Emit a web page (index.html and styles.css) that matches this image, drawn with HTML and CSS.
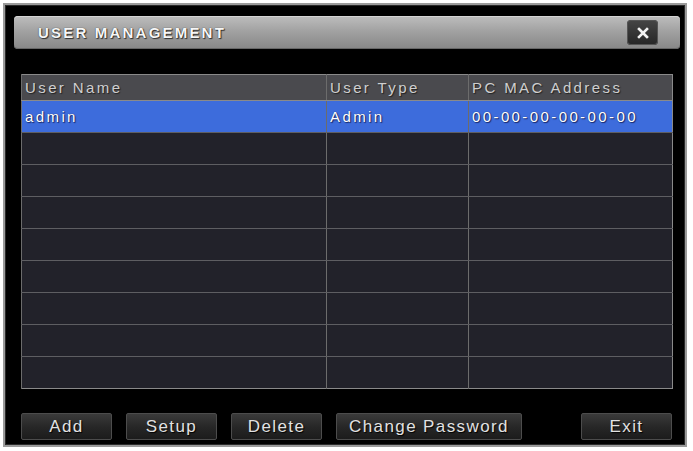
FILE: index.html
```html
<!DOCTYPE html>
<html lang="en">
<head>
    <meta charset="UTF-8">
    <meta name="viewport" content="width=device-width, initial-scale=1.0">
    <title>User Management</title>
    <link rel="stylesheet" href="styles.css">
</head>
<body>
    <div class="window">
        <div class="titlebar">
            <span class="title">USER MANAGEMENT</span>
            <button class="close" type="button" aria-label="Close">
                <svg width="12" height="12" viewBox="0 0 12 12">
                    <path d="M2 2 L10 10 M10 2 L2 10" stroke="#f2f2f2" stroke-width="2.6" stroke-linecap="square"/>
                </svg>
            </button>
        </div>

        <table class="users">
            <colgroup>
                <col class="col-name">
                <col class="col-type">
                <col class="col-mac">
            </colgroup>
            <thead>
                <tr>
                    <th>User Name</th>
                    <th>User Type</th>
                    <th>PC MAC Address</th>
                </tr>
            </thead>
            <tbody>
                <tr class="selected">
                    <td>admin</td>
                    <td>Admin</td>
                    <td>00-00-00-00-00-00</td>
                </tr>
                <tr><td></td><td></td><td></td></tr>
                <tr><td></td><td></td><td></td></tr>
                <tr><td></td><td></td><td></td></tr>
                <tr><td></td><td></td><td></td></tr>
                <tr><td></td><td></td><td></td></tr>
                <tr><td></td><td></td><td></td></tr>
                <tr><td></td><td></td><td></td></tr>
                <tr><td></td><td></td><td></td></tr>
            </tbody>
        </table>

        <div class="actions">
            <button type="button" class="btn btn-small">Add</button>
            <button type="button" class="btn btn-small">Setup</button>
            <button type="button" class="btn btn-small">Delete</button>
            <button type="button" class="btn btn-wide">Change Password</button>
            <button type="button" class="btn btn-small btn-exit">Exit</button>
        </div>
    </div>
</body>
</html>
```

FILE: styles.css
```css
body {
    margin: 0;
    padding: 3px;
    background: #ffffff;
    font-family: 'Liberation Sans', Arial, sans-serif;
}

.window {
    width: 684px;
    height: 444px;
    box-sizing: border-box;
    background: #000;
    border: 2px solid #9a9a9a;
    box-shadow: inset 0 0 0 1px #2a2a2a;
    padding: 11px 5px 0 9px;
}

.titlebar {
    height: 33px;
    box-sizing: border-box;
    display: flex;
    align-items: center;
    justify-content: space-between;
    padding: 0 22px 0 24px;
    border-radius: 4px;
    background: linear-gradient(to bottom, #bdbdbd 0%, #a2a2a2 45%, #878787 100%);
    box-shadow: inset 0 1px 0 #d4d4d4, inset 0 -1px 0 #666;
}

.title {
    color: #f6f6f6;
    font-size: 15px;
    font-weight: bold;
    letter-spacing: 2.2px;
    text-shadow: 0 0 1px #222, 1px 1px 1px #333;
}

.close {
    width: 31px;
    height: 25px;
    padding: 0;
    border: none;
    border-radius: 4px;
    background: linear-gradient(to bottom, #454545, #262626);
    box-shadow: inset 0 0 0 1px #555;
    display: flex;
    align-items: center;
    justify-content: center;
}

.users {
    margin: 25px 0 0 7px;
    width: 651px;
    border-collapse: collapse;
    table-layout: fixed;
    background: #22222a;
    border: 1px solid #8a8a8a;
}

.col-name { width: 305px; }
.col-type { width: 142px; }
.col-mac  { width: 204px; }

.users th,
.users td {
    padding: 0 0 0 3px;
    text-align: left;
    font-weight: normal;
    font-size: 15px;
    letter-spacing: 2.4px;
    white-space: nowrap;
    border-left: 1px solid #6c6c6c;
}

.users th {
    height: 25px;
    background: #4a4a4e;
    color: #cfcfcf;
    border-bottom: 1px solid #8a8a8a;
    text-shadow: 1px 1px 1px #222;
}

.users td {
    height: 31px;
    color: #fff;
    border-bottom: 1px solid #5e5e62;
}

.users tbody tr:last-child td {
    border-bottom: none;
}

.users tr.selected td {
    background: #3d6cdc;
    text-shadow: 0 0 1px #1a2a6a, 1px 1px 1px #1a2a6a;
}

.actions {
    display: flex;
    gap: 14px;
    margin: 24px 8px 0 7px;
}

.btn {
    height: 27px;
    padding: 0;
    border: 1px solid #4c4c4c;
    border-radius: 2px;
    background: linear-gradient(to bottom, #3a3a3a 0%, #262626 55%, #1c1c1c 100%);
    color: #e2e2e2;
    font-family: 'Liberation Sans', Arial, sans-serif;
    font-size: 17px;
    letter-spacing: 1.4px;
    text-shadow: 1px 1px 1px #000;
}

.btn-small {
    width: 91px;
}

.btn-wide {
    width: 186px;
}

.btn-exit {
    margin-left: auto;
}
```
